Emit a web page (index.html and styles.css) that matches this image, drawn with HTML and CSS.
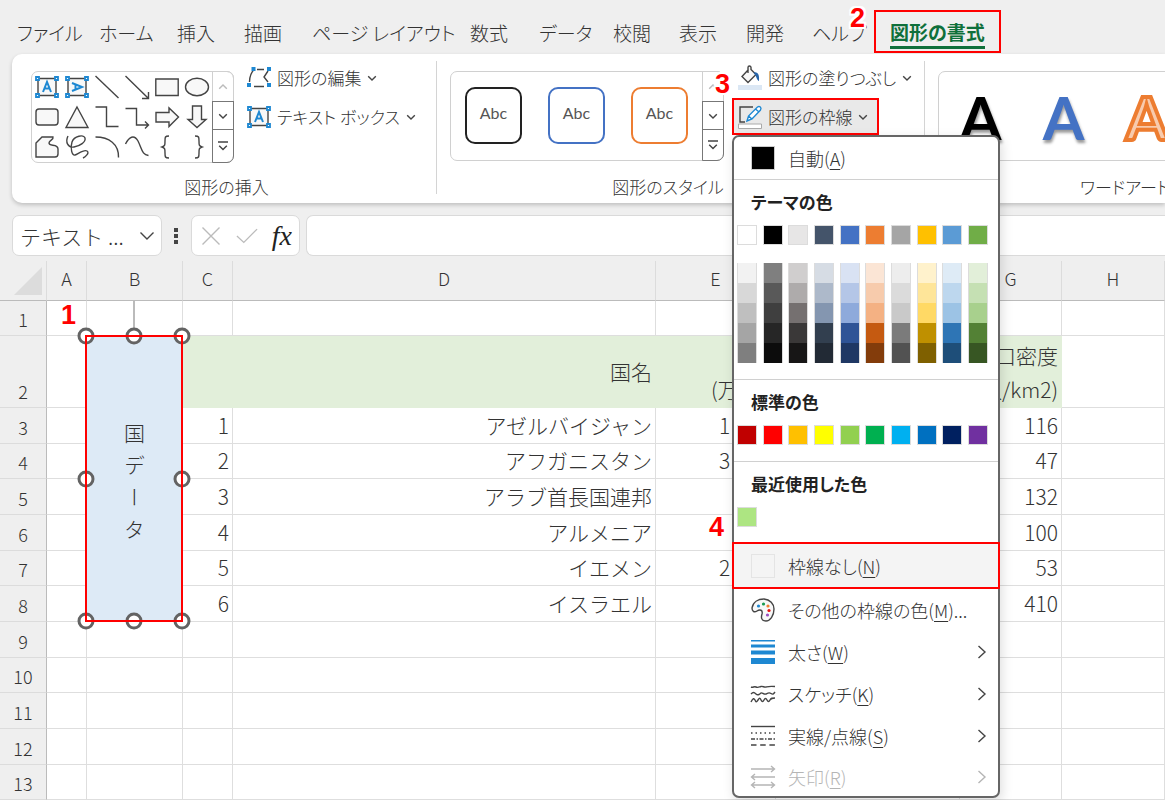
FILE: index.html
```html
<!DOCTYPE html>
<html lang="ja">
<head>
<meta charset="utf-8">
<title>図形の書式</title>
<meta name="viewport" content="width=device-width, initial-scale=1">
<link rel="stylesheet" href="styles.css">
</head>
<body>
<svg class="defs" aria-hidden="true">
  <symbol id="chev-down" viewBox="0 0 10 10"><path d="M1.2 3.2 5 7l3.800-3.800"/></symbol>
  <symbol id="chev-up" viewBox="0 0 10 10"><path d="M1.200 6.800 5 3l3.800 3.800"/></symbol>
  <symbol id="chev-more" viewBox="0 0 10 10"><path d="M0 1h10M1.200 4.700 5 8.500l3.800-3.800"/></symbol>
  <symbol id="chev-right" viewBox="0 0 10 14"><path d="M1.500 1 8 7l-6.500 6"/></symbol>
  <symbol id="frame" viewBox="0 0 24 24">
    <path class="fill" d="M3 3.500h18v17H3z"/>
    <g class="knots"><path d="M1 2h3v3H1zM20 2h3v3h-3zM1 19h3v3H1zM20 19h3v3h-3z"/></g>
  </symbol>
</svg>

<nav class="tabs">
  <button class="tab">ファイル</button>
  <button class="tab">ホーム</button>
  <button class="tab">挿入</button>
  <button class="tab">描画</button>
  <button class="tab">ページ レイアウト</button>
  <button class="tab">数式</button>
  <button class="tab">データ</button>
  <button class="tab">校閲</button>
  <button class="tab">表示</button>
  <button class="tab">開発</button>
  <button class="tab">ヘルプ<b class="mark mark-2">2</b></button>
  <button class="tab active"><span>図形の書式</span></button>
</nav>

<section class="ribbon">
  <div class="group insert">
    <div class="tools">
      <div class="gallery shapes">
        <div class="shape-grid">
          <button aria-label="横書きテキスト"><svg viewBox="0 0 24 24"><use href="#frame"/><path class="letter" d="M8 17 12 7l4 10M9.500 13.500h5"/></svg></button>
          <button aria-label="縦書きテキスト"><svg viewBox="0 0 24 24"><use href="#frame"/><path class="letter" d="M7 8l10 4-10 4M10.500 9.500v5"/></svg></button>
          <button aria-label="線"><svg viewBox="0 0 24 24"><path d="M.5 1 23.500 23"/></svg></button>
          <button aria-label="矢印"><svg viewBox="0 0 24 24"><path d="M.5 1 23 23M23.500 17v6.500H17"/></svg></button>
          <button aria-label="四角形"><svg viewBox="0 0 24 24"><path class="fill" d="M.8 4h22.400v16.500H.8z"/></svg></button>
          <button aria-label="楕円"><svg viewBox="0 0 24 24"><ellipse class="fill" cx="12" cy="12" rx="11.500" ry="8.700"/></svg></button>
          <button aria-label="角丸四角形"><svg viewBox="0 0 24 24"><rect class="fill" x="1" y="4" width="22" height="16" rx="3"/></svg></button>
          <button aria-label="三角形"><svg viewBox="0 0 24 24"><path class="fill" d="M12 2 23 22.500H1z"/></svg></button>
          <button aria-label="カギ線"><svg viewBox="0 0 24 24"><path d="M.5 2h11v19.500h12"/></svg></button>
          <button aria-label="カギ線矢印"><svg viewBox="0 0 24 24"><path d="M.5 3.500h11V20H23M20 16.500l3.500 3.500-3.500 3.500"/></svg></button>
          <button aria-label="右矢印"><svg viewBox="0 0 24 24"><path class="fill" d="M1 7.500h13V3l9.500 9-9.500 9.500V17H1z"/></svg></button>
          <button aria-label="下矢印"><svg viewBox="0 0 24 24"><path class="fill" d="M7.500 1h9v13.500H21L12 22.500l-9-8h4.500z"/></svg></button>
          <button aria-label="フリーフォーム"><svg viewBox="0 0 24 24"><path class="fill" d="M7 2h11c1 3-4 3-4 6 0 4 9 0 9 6v5c0 2-1 3-3 3H1V8z"/></svg></button>
          <button aria-label="フリーハンド"><svg viewBox="0 0 24 24"><path d="M3 1C0 7 3 13 9 12s12-5 11-9-11-2-13 4 0 14 3 13 9-6 12-4-2 6-4 7"/></svg></button>
          <button aria-label="円弧"><svg viewBox="0 0 24 24"><path d="M.5 2C14 2 24 9 23.500 22.500"/></svg></button>
          <button aria-label="曲線"><svg viewBox="0 0 24 24"><path d="M.5 9C4 2 9-1 13 6c4 8 4 14 10.500 14.500"/></svg></button>
          <button aria-label="左中かっこ"><svg viewBox="0 0 24 24"><path d="M14 1c-4 0-4 1-4 5s0 5-3 6c3 1 3 2 3 6s0 5 4 5"/></svg></button>
          <button aria-label="右中かっこ"><svg viewBox="0 0 24 24"><path d="M10 1c4 0 4 1 4 5s0 5 3 6c-3 1-3 2-3 6s0 5-4 5"/></svg></button>
        </div>
        <div class="stepper">
          <button class="off" aria-label="前の行"><svg><use href="#chev-up"/></svg></button>
          <button aria-label="次の行"><svg><use href="#chev-down"/></svg></button>
          <button aria-label="その他"><svg><use href="#chev-more"/></svg></button>
        </div>
      </div>
      <div class="stack">
        <button class="cmd"><svg class="ico" viewBox="0 0 24 24"><path d="M2.500 16c0-6 2-10 5-13M10 3.500h7M21 5l-4 6 4 5M7 20.500h10"/><path class="blue" d="M4.500 1h4v4h-4zM20 1h4v4h-4zM0 17h4v4H0zM20 17h4v4h-4z"/></svg>図形の編集<svg class="chev"><use href="#chev-down"/></svg></button>
        <button class="cmd wide"><svg class="ico" viewBox="0 0 24 24"><use href="#frame"/><path class="letter" d="M8 17 12 7l4 10M9.500 13.500h5"/></svg>テキスト ボックス<svg class="chev"><use href="#chev-down"/></svg></button>
      </div>
    </div>
    <h2>図形の挿入</h2>
  </div>

  <div class="group styles">
    <div class="tools">
      <div class="gallery">
        <div class="presets">
          <button class="preset black">Abc</button>
          <button class="preset azure">Abc</button>
          <button class="preset orange">Abc</button>
        </div>
        <div class="stepper">
          <button class="off" aria-label="前の行"><svg><use href="#chev-up"/></svg></button>
          <button aria-label="次の行"><svg><use href="#chev-down"/></svg></button>
          <button aria-label="その他"><svg><use href="#chev-more"/></svg></button>
        </div>
        <b class="mark mark-3">3</b>
      </div>
      <div class="stack">
        <button class="cmd"><svg class="ico" viewBox="0 0 24 24"><path class="pale" d="M0 19h24v5H0z"/><path class="fill" d="M10.500 3.500 4 10.500l6 6 8-8-5-5V1.500a1.500 1.500 0 0 0-3 0V7"/><path class="navy" d="M15.500 6.500c5-1 6 3 5.500 8.500-2.500-1-2.500-4.500-3.500-5.500z"/></svg>図形の塗りつぶし<svg class="chev"><use href="#chev-down"/></svg></button>
        <div class="drop">
          <button class="cmd open" aria-expanded="true"><svg class="ico" viewBox="0 0 24 24"><path d="M15 2H2v15h5"/><path class="pen" d="M9 16l1.500-5L19.500 2c2-1.500 4.500.5 3 3L14 14zM17.500 4l3.500 3M10.500 11l3.500 3"/><path class="bar" d="M.5 19h23v4.500H.5z"/></svg>図形の枠線<svg class="chev"><use href="#chev-down"/></svg></button>
          <div class="menu">
            <button class="item auto"><i class="chip black-chip"></i><span>自動(<u>A</u>)</span></button>
            <section class="block">
              <h3>テーマの色</h3>
              <div class="swatches" id="theme"></div>
              <div class="swatches shades" id="shades"></div>
            </section>
            <section class="block">
              <h3>標準の色</h3>
              <div class="swatches" id="standard"></div>
            </section>
            <section class="block">
              <h3>最近使用した色</h3>
              <div class="swatches" id="recent"></div>
            </section>
            <button class="item none"><i class="chip"></i><span>枠線なし(<u>N</u>)</span><b class="mark mark-4">4</b></button>
            <button class="item"><svg viewBox="0 0 24 24"><path class="fill" d="M1 10C2 4 7 1 13 1c6 .5 10 5 10 10 0 7-4 12-8 12-5 0-5-4-4-7 1-4-2-5-5-3-3 2-5 0-5-3z"/><circle cx="7.500" cy="8" r="1.600" class="d1"/><circle cx="12.500" cy="6" r="1.600" class="d2"/><circle cx="17" cy="8" r="1.600" class="d3"/><circle cx="18" cy="12.500" r="1.600" class="d4"/><circle cx="16.500" cy="17" r="1.600" class="d5"/></svg><span>その他の枠線の色(<u>M</u>)...</span></button>
            <button class="item"><svg viewBox="0 0 24 24"><path class="blue" d="M0 0h24v1.500H0zM0 4.500h24v3H0zM0 10.500h24v4H0zM0 18h24v6H0z"/></svg><span>太さ(<u>W</u>)</span><svg class="go"><use href="#chev-right"/></svg></button>
            <button class="item"><svg viewBox="0 0 24 24"><path d="M0 5c2 1 3-1 5 0s3 0 5-.5 3 1 5 .5 3-1 9-.5M0 12c2-2 3-2 5 0s4 0 5-1 3 2 5 1 3-2 5-.5 3 0 4-1.500M0 20c2-4 3-4 4-2s1 3 3 0 2-2 3 0 2 2 3 0 2-2 3 0 2 2 3 0 2-2 5-2"/></svg><span>スケッチ(<u>K</u>)</span><svg class="go"><use href="#chev-right"/></svg></button>
            <button class="item"><svg viewBox="0 0 24 24"><path d="M0 2.500h24"/><path d="M0 9h24" stroke-dasharray="1.500 3"/><path d="M0 15h24" stroke-dasharray="4 1.500 1.500 1.500"/><path d="M0 21h24" stroke-dasharray="5.500 3.700"/></svg><span>実線/点線(<u>S</u>)</span><svg class="go"><use href="#chev-right"/></svg></button>
            <button class="item" disabled><svg viewBox="0 0 24 24"><path d="M0 4h23M20 1l3.500 3L20 7M1 12h23M4 9l-3.500 3L4 15M1 20h22M4 17l-3.500 3L4 23M20 17l3.500 3-3.500 3"/></svg><span>矢印(<u>R</u>)</span><svg class="go"><use href="#chev-right"/></svg></button>
          </div>
        </div>
      </div>
    </div>
    <h2>図形のスタイル</h2>
  </div>

  <div class="group wordart">
    <div class="gallery">
      <button class="art art-black">A</button>
      <button class="art art-blue">A</button>
      <button class="art art-orange">A</button>
    </div>
    <h2>ワードアートのスタイル</h2>
  </div>
</section>

<div class="formula">
  <div class="box name">
    <input value="テキスト ..." aria-label="名前ボックス">
    <button aria-label="名前の一覧"><svg viewBox="0 0 16 10"><path d="M1.500 1.500 8 8l6.500-6.500"/></svg></button>
  </div>
  <svg class="grip" viewBox="0 0 4 16"><path d="M0 0h4v4H0zM0 6h4v4H0zM0 12h4v4H0z"/></svg>
  <div class="box keys">
    <button aria-label="キャンセル"><svg viewBox="0 0 20 20"><path d="M1.500 1.500l17 17M18.500 1.500l-17 17"/></svg></button>
    <button aria-label="入力"><svg viewBox="0 0 24 20"><path d="M1 10l7.500 7L23 2.500"/></svg></button>
    <button class="fx" aria-label="関数の挿入">fx</button>
  </div>
  <input class="box bar-input" aria-label="数式バー">
</div>

<main class="sheet">
  <table>
    <colgroup><col class="w-head"><col class="w-a"><col class="w-b"><col class="w-c"><col class="w-d"><col class="w-e"><col class="w-f"><col class="w-g"><col></colgroup>
    <thead><tr><th class="corner"><svg viewBox="0 0 28 28"><path d="M28 0v28H0z"/></svg></th><th>A</th><th>B</th><th>C</th><th>D</th><th>E</th><th></th><th>G</th><th>H</th></tr></thead>
    <tbody>
      <tr><th>1</th><td></td><td></td><td></td><td></td><td></td><td></td><td></td><td></td></tr>
      <tr class="title"><th>2</th><td></td><td></td><td class="g"></td><td class="g mid">国名</td><td class="g start">(万</td><td class="g"></td><td class="g">人口密度<br>(人/km2)</td><td></td></tr>
      <tr><th>3</th><td></td><td></td><td>1</td><td>アゼルバイジャン</td><td class="start">1</td><td></td><td>116</td><td></td></tr>
      <tr><th>4</th><td></td><td></td><td>2</td><td>アフガニスタン</td><td class="start">3</td><td></td><td>47</td><td></td></tr>
      <tr><th>5</th><td></td><td></td><td>3</td><td>アラブ首長国連邦</td><td></td><td></td><td>132</td><td></td></tr>
      <tr><th>6</th><td></td><td></td><td>4</td><td>アルメニア</td><td></td><td></td><td>100</td><td></td></tr>
      <tr><th>7</th><td></td><td></td><td>5</td><td>イエメン</td><td class="start">2</td><td></td><td>53</td><td></td></tr>
      <tr><th>8</th><td></td><td></td><td>6</td><td>イスラエル</td><td></td><td></td><td>410</td><td></td></tr>
      <tr><th>9</th><td></td><td></td><td></td><td></td><td></td><td></td><td></td><td></td></tr>
      <tr><th>10</th><td></td><td></td><td></td><td></td><td></td><td></td><td></td><td></td></tr>
      <tr><th>11</th><td></td><td></td><td></td><td></td><td></td><td></td><td></td><td></td></tr>
      <tr><th>12</th><td></td><td></td><td></td><td></td><td></td><td></td><td></td><td></td></tr>
      <tr><th>13</th><td></td><td></td><td></td><td></td><td></td><td></td><td></td><td></td></tr>
    </tbody>
  </table>
  <div class="textbox">
    <svg class="handles" viewBox="-49 -35 98 321">
      <path d="M0-35V0"/>
      <g><circle cx="-48" r="7"/><circle r="7"/><circle cx="48" r="7"/><circle cx="-48" cy="143" r="7"/><circle cx="48" cy="143" r="7"/><circle cx="-48" cy="285" r="7"/><circle cy="285" r="7"/><circle cx="48" cy="285" r="7"/></g>
    </svg>
    <span>国</span><span>デ</span><span>ー</span><span>タ</span>
    <b class="mark mark-1">1</b>
  </div>
</main>
<script src="app.js"></script>
</body>
</html>
```
FILE: styles.css
```css
* { box-sizing: border-box; }

body {
  margin: 0;
  height: 100vh;
  overflow: hidden;
  display: flex;
  flex-direction: column;
  background: #efefef;
  color: #333;
  font: 300 18px/24px "Noto Sans CJK JP", sans-serif;
}

button, input {
  font: inherit;
  color: inherit;
  border: 0;
  padding: 0;
  background: none;
}

h2, h3 { margin: 0; font-size: 17px; }
h2 { font-weight: 300; text-align: center; }
.defs { position: absolute; width: 0; height: 0; }

svg {
  fill: none;
  stroke: #444;
  stroke-width: 1.4;
  overflow: visible;
  flex: none;
  display: block;
}
.fill { fill: #f8f8f8; }
.blue { fill: #1e88d2; stroke: none; }
.knots { fill: #fff; stroke: #1e88d2; stroke-width: 1.8; }
.letter { stroke: #1e88d2; stroke-width: 2; }

/* Tabs */
.tabs {
  flex: none;
  height: 54px;
  padding-left: 17px;
  display: grid;
  grid-template-columns: 82px 78px 67px 68px 158px 69px 74px 66px 67px 66px 62px max-content;
  font-size: 19px;
  font-feature-settings: "palt";
}
.tab {
  position: relative;
  text-align: left;
  white-space: nowrap;
  padding-top: 12px;
}
.tab.active {
  align-self: end;
  height: 43px;
  margin-bottom: 1px;
  padding: 7px 14px 2px;
  border: 2px solid #f00;
  color: #0f703b;
  font-weight: 700;
}
.tab.active span {
  display: block;
  padding-bottom: 2px;
  border-bottom: 3px solid #0f703b;
}

/* Numbered callouts */
.mark {
  position: absolute;
  z-index: 6;
  color: #f00;
  font: 700 27px/28px "Liberation Sans", sans-serif;
  text-shadow: 2px 0 #fff, -2px 0 #fff, 0 2px #fff, 0 -2px #fff, 2px 2px #fff, -2px -2px #fff, 2px -2px #fff, -2px 2px #fff;
}
.mark-1 { left: -24px; top: -34px; }
.mark-2 { right: 9px; top: 4px; }
.mark-3 { right: -7px; top: -2px; }
.mark-4 { left: -25px; top: -31px; }

/* Ribbon */
.ribbon {
  position: relative;
  z-index: 5;
  flex: none;
  display: flex;
  height: 149px;
  margin-left: 12px;
  background: #fff;
  border-radius: 10px 0 0 10px;
  box-shadow: 0 2px 4px #0003;
}
.group {
  position: relative;
  flex: none;
  display: flex;
  flex-direction: column;
  justify-content: space-between;
  padding: 5px 0 4px;
  font-feature-settings: "palt";
}
.group + .group::before {
  content: "";
  position: absolute;
  left: 0;
  top: 7px;
  bottom: 9px;
  width: 1px;
  background: #d4d4d4;
}
.insert { width: 424px; padding-left: 19px; }
.insert h2 { padding-right: 14px; }
.styles { width: 488px; padding-left: 14px; z-index: 2; }
.styles h2 { padding-right: 38px; }
.wordart { flex: 1 1 0; min-width: 0; overflow: hidden; padding-left: 14px; }
.wordart h2 { padding-left: 142px; text-align: left; white-space: nowrap; }
.tools { display: flex; }

.gallery {
  position: relative;
  display: flex;
  flex: none;
  height: 90px;
  margin-top: 12px;
  border: 1px solid #d0d0d0;
  border-radius: 7px;
}
.shape-grid {
  display: grid;
  grid-template-columns: repeat(6, 30px);
  grid-template-rows: repeat(3, 30px);
}
.shape-grid button { display: grid; place-items: center; }
.shape-grid svg { width: 24px; height: 24px; }
.shapes { height: 92px; }

.stepper {
  width: 22px;
  display: grid;
  grid-template-rows: 31px 28px 1fr;
  margin: -1px -1px -1px auto;
}
.stepper button { display: grid; place-items: center; border: 1px solid #777; margin-top: -1px; }
.stepper .off { border-color: #d0d0d0; border-radius: 0 7px 0 0; margin: 0; }
.stepper button:last-child { border-radius: 0 0 7px 0; }
.stepper svg, .chev { width: 10px; height: 10px; }
.off svg { stroke: #bbb; }

.stack { display: flex; flex-direction: column; gap: 2px; margin-left: 7px; }
.cmd {
  display: flex;
  align-items: center;
  gap: 6px;
  height: 37px;
  padding: 0 6px;
  white-space: nowrap;
  color: #333;
  font-size: 17px;
}
.ico { width: 24px; height: 24px; }
.pale { fill: #dbe7f4; stroke: none; }
.navy { fill: #2764a8; stroke: none; }
.pen { stroke: #1e88d2; fill: #fff; }
.bar { fill: #fff; stroke: #aaa; stroke-width: 1; }

.presets { display: flex; gap: 26px; padding: 15px 0 0 14px; }
.preset {
  width: 57px;
  height: 57px;
  border: 2px solid;
  border-radius: 10px;
  font: 400 16px/20px Lato, sans-serif;
  padding-bottom: 6px;
}
.preset { color: #555; }
.preset.black { border-color: #222; }
.preset.azure { border-color: #4472c4; }
.preset.orange { border-color: #ed7d31; }
.styles .gallery { width: 274px; }
.styles .stack { margin-left: 8px; }

.drop { position: relative; }
.open {
  width: 147px;
  padding: 0 4px;
  border: 2px solid #f00;
  background: #e9e9e9;
}

.wordart .gallery {
  width: 400px;
  padding: 0 0 0 11px;
  gap: 22px;
}
.art { width: 61px; font: 700 60px/90px Lato, sans-serif; text-shadow: 1px 3px 3px #0006; }
.art-black { color: #000; }
.art-blue { color: #4472c4; }
.art-orange { color: #f8cbad; -webkit-text-stroke: 4px #ed7d31; text-shadow: none; }

/* Outline colour menu */
.menu {
  position: absolute;
  left: 0;
  top: 100%;
  width: 268px;
  background: #fff;
  border: 2px solid #666;
  border-radius: 7px;
  box-shadow: 2px 4px 12px #0002;
  color: #333;
}
.item {
  position: relative;
  display: flex;
  align-items: center;
  gap: 13px;
  width: 100%;
  height: 42px;
  padding: 0 11px 0 17px;
  text-align: left;
  white-space: nowrap;
}
.item > svg { width: 24px; height: 24px; }
.item .go { width: 10px; height: 14px; margin-left: auto; }
.item:disabled { height: 39px; color: #b5b5b5; }
.item:disabled svg { stroke: #b5b5b5; }
.item u { text-underline-offset: 3px; text-decoration-thickness: 1px; }
.item.auto { height: 42px; }
.chip { width: 24px; height: 24px; border: 1px solid #e4e4e4; flex: none; }
.black-chip { background: #000; border-color: #ccc; }
.item.none {
  width: 268px;
  height: 47px;
  margin: 0 -2px;
  border: 2px solid #f00;
  background: #f4f4f4;
}
.block { border-top: 1px solid #d0d0d0; padding: 10px 10px 16px 3px; }
.block:nth-of-type(3) { padding-bottom: 15px; }
.block h3 { padding-left: 14px; margin-bottom: 11px; font-weight: 700; color: #222; }
.swatches { display: flex; justify-content: space-between; }
.swatch { width: 20px; height: 20px; border: 1px solid #dcdcdc; }
.shades { margin-top: 18px; }
.shade { display: grid; border: solid #dcdcdc; border-width: 0 1px; }
.shade .swatch { width: 18px; border: 0; }
.d1 { fill: #1e88d2; stroke: none; }
.d2 { fill: #1a9a50; stroke: none; }
.d3 { fill: #f08030; stroke: none; }
.d4 { fill: #e81010; stroke: none; }
.d5 { fill: #9a50c0; stroke: none; }

/* Formula bar */
.formula {
  flex: none;
  display: flex;
  align-items: center;
  gap: 6px;
  padding: 12px 0 5px 12px;
}
.box {
  height: 41px;
  background: #fff;
  border: 1px solid #dadada;
  border-radius: 7px;
}
.name { width: 150px; display: flex; align-items: center; padding: 0 6px 0 7px; }
.name input { flex: 1; min-width: 0; font-size: 21px; }
.name svg { width: 16px; height: 10px; }
.grip { width: 4px; height: 16px; fill: #444; stroke: none; margin: 0 7px 0 6px; }
.keys { width: 109px; display: flex; align-items: center; justify-content: space-between; padding: 0 7px 0 8px; }
.keys svg { width: 22px; height: 20px; stroke: #bbb; }
.fx { font: italic 400 28px/30px "Liberation Serif", serif; color: #222; }
.bar-input { flex: 1; border-radius: 7px 0 0 7px; border-right: 0; }

/* Worksheet */
.sheet { position: relative; flex: 1; min-height: 0; background: #fff; }
table { width: 100%; table-layout: fixed; border-collapse: separate; border-spacing: 0; font-size: 21px; }
.w-head { width: 47px; }
.w-a { width: 40px; }
.w-b { width: 96px; }
.w-c { width: 50px; }
.w-d { width: 423px; }
.w-e { width: 120px; }
.w-f { width: 184px; }
.w-g { width: 102px; }
th {
  background: #efefef;
  padding: 0;
  font-size: 18px;
  font-weight: 300;
  line-height: 24px;
  border-right: 1px solid #dcdcdc;
  border-bottom: 1px solid #dcdcdc;
}
thead th { height: 40px; padding-bottom: 6px; border-bottom-color: #bbb; }
.corner { padding: 0 4px 0 0; }
.corner svg { width: 28px; height: 28px; margin-left: auto; fill: #dcdcdc; stroke: none; }
tbody th { vertical-align: bottom; padding-bottom: 4px; border-right-color: #bbb; }
td {
  height: 36px;
  padding: 0 3px 1px 0;
  text-align: right;
  line-height: 34px;
  border-right: 1px solid #dedede;
  border-bottom: 1px solid #dedede;
  white-space: nowrap;
}
tbody tr:nth-child(3n+1) td { height: 35px; line-height: 33px; }
tbody .title td { height: 72px; vertical-align: bottom; }
tbody .title .mid { vertical-align: middle; }
.g, .title td:nth-child(3) { background: #e2efda; border-color: #e2efda; }
td.start { text-align: left; padding-left: 63px; }
td.g.start { padding-left: 55px; }

.textbox {
  position: absolute;
  left: 85px;
  top: 74px;
  width: 98px;
  height: 287px;
  display: flex;
  flex-direction: column;
  align-items: center;
  justify-content: center;
  gap: 11px;
  padding-top: 6px;
  background: #ddeaf6;
  font-size: 21px;
  line-height: 21px;
}
.textbox::after { content: ""; position: absolute; inset: 0; border: 2px solid #f00; }
.textbox span { writing-mode: vertical-rl; height: 21px; }
.handles {
  position: absolute;
  left: 0;
  top: -34px;
  width: 98px;
  height: 321px;
  stroke: #bbb;
  stroke-width: 2;
}
.handles g { fill: #fff; stroke: #636363; stroke-width: 3; }
```
FILE: app.js
```js
const theme = ["#ffffff", "#000000", "#e7e6e6", "#44546a", "#4472c4", "#ed7d31", "#a5a5a5", "#ffc000", "#5b9bd5", "#70ad47"];
const shades = [
  ["#f2f2f2", "#d8d8d8", "#bfbfbf", "#a5a5a5", "#7f7f7f"],
  ["#7f7f7f", "#595959", "#3f3f3f", "#262626", "#0c0c0c"],
  ["#d0cece", "#aeabab", "#757070", "#3a3838", "#171616"],
  ["#d6dce4", "#adb9ca", "#8496b0", "#323f4f", "#222a35"],
  ["#d9e2f3", "#b4c6e7", "#8eaadb", "#2f5496", "#1f3864"],
  ["#fbe5d5", "#f7cbac", "#f4b183", "#c55a11", "#833c0b"],
  ["#ededed", "#dbdbdb", "#c9c9c9", "#7b7b7b", "#525252"],
  ["#fff2cc", "#fee599", "#ffd965", "#bf9000", "#7f6000"],
  ["#deebf6", "#bdd7ee", "#9cc3e5", "#2e75b5", "#1e4e79"],
  ["#e2efd9", "#c5e0b3", "#a8d08d", "#538135", "#375623"]
];
const standard = ["#c00000", "#ff0000", "#ffc000", "#ffff00", "#92d050", "#00b050", "#00b0f0", "#0070c0", "#002060", "#7030a0"];
const recent = ["#ade582"];

function swatch(color) {
  const button = document.createElement("button");
  button.className = "swatch";
  button.style.backgroundColor = color;
  button.setAttribute("aria-label", color);
  return button;
}

document.getElementById("theme").append(...theme.map(swatch));
document.getElementById("standard").append(...standard.map(swatch));
document.getElementById("recent").append(...recent.map(swatch));
document.getElementById("shades").append(...shades.map(column => {
  const stack = document.createElement("div");
  stack.className = "shade";
  stack.append(...column.map(swatch));
  return stack;
}));
```
